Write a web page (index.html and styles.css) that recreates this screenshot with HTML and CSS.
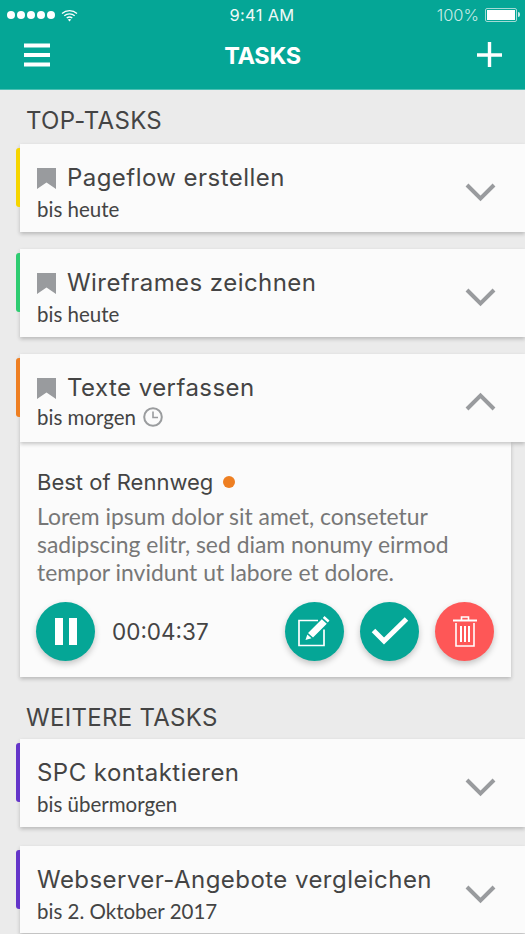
FILE: index.html
```html
<!DOCTYPE html>
<html lang="de">
<head>
    <meta charset="UTF-8">
    <meta name="viewport" content="width=device-width, initial-scale=1.0">
    <title>Tasks</title>
    <link rel="stylesheet" href="styles.css">
</head>
<body>
    <svg class="icon-defs" width="0" height="0">
        <symbol id="bookmark" viewBox="0 0 19 21"><path d="M0 0H19V21L9.500 14.500L0 21Z"/></symbol>
        <symbol id="chevron" viewBox="0 0 31 19"><path d="M2 2L15.500 15.500L29 2" fill="none" stroke-width="4"/></symbol>
    </svg>

    <header class="app-header">
        <div class="status-bar">
            <div class="status-left">
                <span class="signal"><i></i><i></i><i></i><i></i><i></i></span>
                <svg class="wifi" width="17" height="13" viewBox="0 0 17 13">
                    <path d="M1 4.400C5.200 .6 11.800 .6 16 4.400M3.300 6.800C6.200 4.200 10.800 4.200 13.700 6.800M5.700 9.100C7.300 7.800 9.700 7.800 11.300 9.100" fill="none" stroke="#fff" stroke-width="1.300"/>
                    <path d="M6.800 10.600C7.800 9.900 9.200 9.900 10.200 10.600L8.500 12.600Z" fill="#fff"/>
                </svg>
            </div>
            <div class="status-time">9:41 AM</div>
            <div class="status-right">
                <span>100%</span>
                <span class="battery"><span class="battery-fill"></span></span>
            </div>
        </div>
        <div class="nav-bar">
            <button class="nav-btn" type="button" aria-label="Menü">
                <svg width="26" height="24" viewBox="0 0 26 24"><path d="M0 2.500H26M0 12H26M0 21.500H26" stroke="#fff" stroke-width="4"/></svg>
            </button>
            <h1>TASKS</h1>
            <button class="nav-btn" type="button" aria-label="Neu">
                <svg width="26" height="26" viewBox="0 0 26 26"><path d="M0 13H25M12.500 0V25" stroke="#fff" stroke-width="3.400"/></svg>
            </button>
        </div>
    </header>

    <main>
        <h2 class="section-title">TOP-TASKS</h2>

        <div class="task tab-yellow">
            <div class="task-info">
                <div class="task-name"><svg class="bookmark"><use href="#bookmark"/></svg>Pageflow erstellen</div>
                <div class="task-date">bis heute</div>
            </div>
            <svg class="chevron"><use href="#chevron"/></svg>
        </div>

        <div class="task tab-green">
            <div class="task-info">
                <div class="task-name"><svg class="bookmark"><use href="#bookmark"/></svg>Wireframes zeichnen</div>
                <div class="task-date">bis heute</div>
            </div>
            <svg class="chevron"><use href="#chevron"/></svg>
        </div>

        <div class="task task-open tab-orange">
            <div class="task-info">
                <div class="task-name"><svg class="bookmark"><use href="#bookmark"/></svg>Texte verfassen</div>
                <div class="task-date">bis morgen
                    <svg class="clock" width="20" height="20" viewBox="0 0 20 20">
                        <circle cx="10" cy="10" r="8.800" fill="none" stroke-width="2"/>
                        <path d="M10 4.500V10.500H15" fill="none" stroke-width="1.600"/>
                    </svg>
                </div>
            </div>
            <svg class="chevron chevron-up"><use href="#chevron"/></svg>
        </div>
        <div class="task-detail">
            <div class="project">Best of Rennweg <span class="dot"></span></div>
            <p class="description">Lorem ipsum dolor sit amet, consetetur sadipscing elitr, sed diam nonumy eirmod tempor invidunt ut labore et dolore.</p>
            <div class="controls">
                <button class="round" type="button" aria-label="Pause">
                    <svg width="22" height="27" viewBox="0 0 22 27"><path d="M0 0H8V27H0ZM14 0H22V27H14Z" fill="#fff"/></svg>
                </button>
                <span class="timer">00:04:37</span>
                <button class="round push" type="button" aria-label="Bearbeiten">
                    <svg width="33" height="33" viewBox="0 0 33 33">
                        <path d="M26 14.500V30.500H1V5.500H20" fill="none" stroke="#fff" stroke-width="1.700"/>
                        <path d="M26.500 1L31.500 5.500L29.800 7.500L24.800 3ZM23.800 4.200L28.800 8.700L15 22.500L10 18Z" fill="#fff"/>
                        <path d="M9.300 19.500L13.500 23.300L7.500 25Z" fill="#fff"/>
                    </svg>
                </button>
                <button class="round" type="button" aria-label="Erledigt">
                    <svg width="38" height="29" viewBox="0 0 38 29"><path d="M2.500 13.500L13 24L35.500 2" fill="none" stroke="#fff" stroke-width="5"/></svg>
                </button>
                <button class="round red" type="button" aria-label="Löschen">
                    <svg width="24" height="31" viewBox="0 0 24 31" fill="none" stroke="#fff">
                        <path d="M0 4.500H24" stroke-width="2"/>
                        <path d="M8.500 4V1H15.500V4" stroke-width="1.600"/>
                        <path d="M3 7V30H21V7" stroke-width="1.600"/>
                        <path d="M8 10V26M12 10V26M16 10V26" stroke-width="2"/>
                    </svg>
                </button>
            </div>
        </div>

        <h2 class="section-title section-more">WEITERE TASKS</h2>

        <div class="task task-spaced tab-purple">
            <div class="task-info">
                <div class="task-name">SPC kontaktieren</div>
                <div class="task-date">bis übermorgen</div>
            </div>
            <svg class="chevron"><use href="#chevron"/></svg>
        </div>

        <div class="task task-last tab-purple">
            <div class="task-info">
                <div class="task-name">Webserver-Angebote vergleichen</div>
                <div class="task-date">bis 2. Oktober 2017</div>
            </div>
            <svg class="chevron"><use href="#chevron"/></svg>
        </div>
    </main>
</body>
</html>
```

FILE: styles.css
```css
html, body {
    height: 100%;
}

body {
    margin: 0;
    height: 934px;
    overflow: hidden;
    background-color: #ebebeb;
    color: #444;
    font-family: "Lato", "Noto Sans", sans-serif;
}

.icon-defs {
    display: block;
    height: 0;
}

button {
    border: none;
    background: none;
    padding: 0;
    cursor: pointer;
}

/* header */

.app-header {
    background-color: #05a696;
    height: 89px;
    border-bottom: 1px solid #4cc0b4;
    color: white;
}

.status-bar {
    display: grid;
    grid-template-columns: 1fr auto 1fr;
    align-items: center;
    height: 30px;
    padding: 0 7px;
}

.status-left {
    display: flex;
    align-items: center;
    gap: 6px;
}

.signal {
    display: flex;
    gap: 2px;
}

.signal i {
    width: 8px;
    height: 8px;
    border-radius: 50%;
    background-color: white;
}

.status-time {
    margin-left: -1px;
    font-family: "Inter", sans-serif;
    font-size: 16.5px;
    letter-spacing: 0.3px;
    color: #eef9f8;
}

.status-right {
    display: flex;
    justify-content: flex-end;
    align-items: center;
    gap: 6px;
    padding-right: 1px;
    font-family: "Inter", sans-serif;
    font-weight: 300;
    font-size: 16.5px;
    color: #c8ebe7;
}

.battery {
    position: relative;
    display: block;
    width: 32px;
    height: 14px;
    box-sizing: border-box;
    border: 1px solid #a5dbd5;
    border-radius: 2px;
    padding: 1px;
}

.battery::after {
    content: "";
    position: absolute;
    right: -4px;
    top: 3px;
    width: 2px;
    height: 5px;
    border-radius: 0 2px 2px 0;
    background-color: #c8ebe7;
}

.battery-fill {
    display: block;
    height: 100%;
    background-color: white;
}

.nav-bar {
    display: flex;
    justify-content: space-between;
    align-items: center;
    height: 50px;
    padding: 0 22px 0 24px;
}

.nav-bar h1 {
    margin: 0 2px 0 0;
    font-family: "Inter", sans-serif;
    font-size: 23.5px;
    font-weight: 700;
    letter-spacing: -0.3px;
}

.nav-btn {
    display: flex;
}

/* lists */

.section-title {
    margin: 0;
    height: 54px;
    box-sizing: border-box;
    padding: 17px 0 0 26px;
    font-family: "Inter", sans-serif;
    font-size: 24px;
    line-height: 28px;
    font-weight: 400;
    letter-spacing: 0.3px;
    color: #444;
}

.section-more {
    height: 62px;
    padding-top: 27px;
}

.task {
    position: relative;
    z-index: 1;
    display: flex;
    justify-content: space-between;
    align-items: flex-start;
    box-sizing: border-box;
    height: 88px;
    margin: 0 0 17px 20px;
    padding: 18px 29px 0 17px;
    background-color: #fbfbfb;
    box-shadow: 0 2px 4px rgba(0, 0, 0, 0.22);
}

.task::before {
    content: "";
    position: absolute;
    left: -4px;
    top: 4px;
    width: 4px;
    height: 59px;
    border-radius: 3px 0 0 3px;
    background-color: var(--tab);
}

.tab-yellow { --tab: #f6d500; }
.tab-green { --tab: #2ecc71; }
.tab-orange { --tab: #ee7f22; }
.tab-purple { --tab: #6435c9; }

.task-open {
    margin-bottom: 0;
}

.task-spaced {
    margin-bottom: 19px;
}

.task-last {
    height: 87px;
}

.task-name {
    display: flex;
    align-items: center;
    font-family: "Inter", sans-serif;
    font-size: 24px;
    line-height: 32px;
    letter-spacing: 0.45px;
    color: #444;
}

.bookmark {
    width: 19px;
    height: 21px;
    margin-right: 11px;
    fill: #999b9e;
}

.task-date {
    display: flex;
    align-items: center;
    gap: 7px;
    font-size: 20.5px;
    line-height: 30px;
    color: #444;
}

.task-open .task-date {
    margin-top: -2px;
}

.clock {
    stroke: #9a9c9e;
}

.chevron {
    width: 31px;
    height: 19px;
    margin-top: 21px;
    stroke: #999b9e;
}

.chevron-up {
    margin-top: 20px;
    transform: rotate(180deg);
}

/* open task */

.task-detail {
    box-sizing: border-box;
    height: 235px;
    margin: 0 14px 0 20px;
    padding: 26px 17px 0 16px;
    background-color: #fbfbfb;
    box-shadow: 0 2px 4px rgba(0, 0, 0, 0.22);
}

.project {
    display: flex;
    align-items: center;
    gap: 10px;
    padding-left: 1px;
    font-family: "Inter", sans-serif;
    font-size: 22px;
    line-height: 28px;
}

.dot {
    width: 12px;
    height: 12px;
    border-radius: 50%;
    background-color: #ee7f22;
}

.description {
    margin: 6px 0 0 1px;
    font-size: 22.9px;
    line-height: 28px;
    color: #777;
}

.controls {
    display: flex;
    align-items: center;
    gap: 16px;
    margin-top: 16px;
}

.round {
    flex: none;
    display: flex;
    justify-content: center;
    align-items: center;
    width: 59px;
    height: 59px;
    border-radius: 50%;
    background-color: #05a696;
    box-shadow: 0 3px 6px rgba(0, 0, 0, 0.22);
}

.red {
    background-color: #fe5757;
}

.push {
    margin-left: auto;
}

.timer {
    margin-left: 1px;
    font-family: "Inter", sans-serif;
    font-size: 22.5px;
    color: #444;
}
```
